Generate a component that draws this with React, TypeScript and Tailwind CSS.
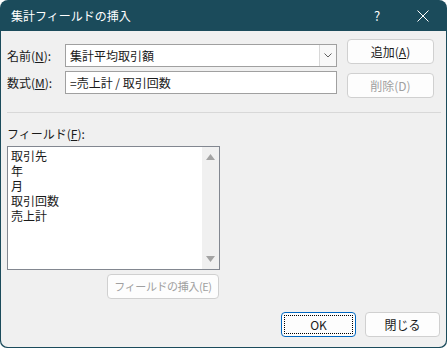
const jp = { fontFamily: '"Noto Sans CJK JP", "Noto Sans", sans-serif' };

const Btn: React.FC<{ label: React.ReactNode; w: string; disabled?: boolean; focus?: boolean }> = ({ label, w, disabled, focus }) => {
  return (
    <div
      className={`${w} h-[25px] rounded-[4px] border bg-[#fdfdfd] flex items-center justify-center text-[12px] whitespace-nowrap ${
        focus ? "border-[#0067c0] p-[2px]" : "border-[#d0d0d0]"
      } ${disabled ? "text-[#a0a0a0]" : "text-[#1a1a1a]"}`}
    >
      {focus ? (
        <div className="w-full h-full border border-dotted border-black flex items-center justify-center">{label}</div>
      ) : (
        label
      )}
    </div>
  );
};

export default function App() {
  const fields = ["取引先", "年", "月", "取引回数", "売上計"];
  return (
    <div className="w-[447px] h-[348px] bg-[#1b4b5b] rounded-t-[8px] rounded-b-[7px] flex flex-col leading-[15px]" style={jp}>
      <div className="h-[31px] flex items-center pl-[11px] text-white text-[12px]">
        <span className="flex-1">集計フィールドの挿入</span>
        <span className="w-[14px] text-[13px] mr-[33px] text-center">?</span>
        <svg width="12" height="12" viewBox="0 0 12 12" className="mr-[18px]">
          <path d="M0.5 0.5 L11.5 11.5 M11.5 0.5 L0.5 11.5" stroke="white" strokeWidth="1" />
        </svg>
      </div>
      <div className="flex-1 mx-[1px] mb-[1px] bg-[#f0f0f0] rounded-b-[7px] pl-[6px] pt-[8px] text-[12px] text-[#1a1a1a]">
        <div className="flex">
          <div className="flex flex-col gap-[4px] mt-[5px] w-[330px]">
            <div className="flex items-center h-[23px]">
              <span className="w-[58px]">
                名前(<u>N</u>):
              </span>
              <div className="flex-1 h-[23px] border border-[#a0a0a0] bg-white flex items-center pl-[4px]">
                <span className="flex-1">集計平均取引額</span>
                <div className="w-[17px] h-[21px] border-l border-[#d8d8d8] bg-[#f8f8f8] flex items-center justify-center">
                  <svg width="8" height="5" viewBox="0 0 8 5">
                    <path d="M0.5 0.5 L4 4 L7.5 0.5" stroke="#606060" fill="none" strokeWidth="1" />
                  </svg>
                </div>
              </div>
            </div>
            <div className="flex items-center h-[23px]">
              <span className="w-[58px]">
                数式(<u>M</u>):
              </span>
              <div className="flex-1 h-[23px] border border-[#a0a0a0] bg-white flex items-center pl-[4px]">
                =売上計 / 取引回数
              </div>
            </div>
          </div>
          <div className="flex flex-col gap-[9px] ml-[10px]">
            <Btn w="w-[87px]" label={<span>追加(<u>A</u>)</span>} />
            <Btn w="w-[87px]" label="削除(D)" disabled />
          </div>
        </div>
        <div className="mt-[14px] mr-[5px] h-px bg-[#d8d8d8]" />
        <div className="mt-[13px]">
          フィールド(<u>F</u>):
        </div>
        <div className="mt-[5px] w-[213px] h-[124px] border border-[#828790] bg-white flex">
          <div className="flex-1 pl-[3px] pt-px">
            {fields.map((f, i) => (
              <div key={i} className="h-[15px] leading-[15px] text-[12px] overflow-hidden">
                {f}
              </div>
            ))}
          </div>
          <div className="w-[17px] bg-[#f0f0f0] flex flex-col items-center justify-between py-[7px]">
            <svg width="9" height="6" viewBox="0 0 9 6">
              <path d="M0 6 L4.5 0 L9 6 Z" fill="#a3a3a3" />
            </svg>
            <svg width="9" height="6" viewBox="0 0 9 6">
              <path d="M0 0 L4.5 6 L9 0 Z" fill="#a3a3a3" />
            </svg>
          </div>
        </div>
        <div className="mt-[4px] ml-[100px]">
          <Btn w="w-[112px]" label={<span className="text-[11px] tracking-[-0.4px]">フィールドの挿入(E)</span>} disabled />
        </div>
        <div className="flex justify-end gap-[9px] mt-[13px] mr-[6px]">
          <Btn w="w-[75px]" label="OK" focus />
          <Btn w="w-[75px]" label="閉じる" />
        </div>
      </div>
    </div>
  );
}
